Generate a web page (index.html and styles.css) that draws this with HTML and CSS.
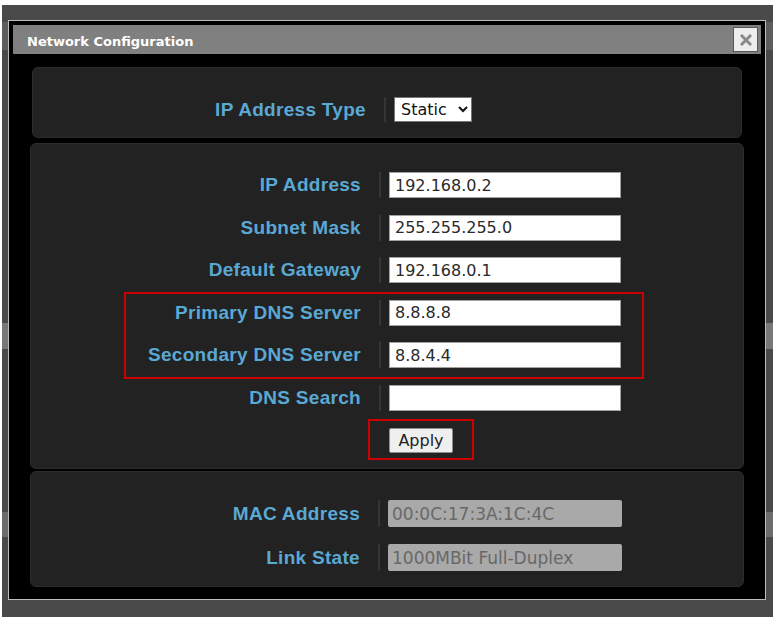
FILE: index.html
```
<!DOCTYPE html>
<html>
<head>
    <title>Network Configuration</title>
    <link rel="stylesheet" href="styles.css">
</head>
<body>

<div class="app">
    <div class="band band-top"></div>
    <div class="band band-mid"></div>
    <div class="band band-low"></div>

    <div class="dialog">
        <div class="titlebar">
            <span class="title">Network Configuration</span>
            <button class="close" title="Close">
                <svg width="12" height="12" viewBox="0 0 12 12">
                    <path d="M2 2 L10 10 M10 2 L2 10" stroke="#8a8a8a" stroke-width="3" stroke-linecap="square"/>
                </svg>
            </button>
        </div>

        <div class="content">
            <div class="panel panel-type">
                <div class="row">
                    <label>IP Address Type</label>
                    <span class="sep"></span>
                    <select>
                        <option>Static</option>
                        <option>DHCP</option>
                    </select>
                </div>
            </div>

            <div class="panel panel-ip">
                <div class="row">
                    <label>IP Address</label>
                    <span class="sep"></span>
                    <input type="text" value="192.168.0.2">
                </div>
                <div class="row">
                    <label>Subnet Mask</label>
                    <span class="sep"></span>
                    <input type="text" value="255.255.255.0">
                </div>
                <div class="row">
                    <label>Default Gateway</label>
                    <span class="sep"></span>
                    <input type="text" value="192.168.0.1">
                </div>
                <div class="row">
                    <label>Primary DNS Server</label>
                    <span class="sep"></span>
                    <input type="text" value="8.8.8.8">
                </div>
                <div class="row">
                    <label>Secondary DNS Server</label>
                    <span class="sep"></span>
                    <input type="text" value="8.8.4.4">
                </div>
                <div class="row">
                    <label>DNS Search</label>
                    <span class="sep"></span>
                    <input type="text" value="">
                </div>
                <div class="row row-apply">
                    <label></label>
                    <span class="sep blank"></span>
                    <button class="apply">Apply</button>
                </div>

                <!-- annotation boxes -->
                <div class="highlight hl-dns"></div>
                <div class="highlight hl-apply"></div>
            </div>

            <div class="panel panel-info">
                <div class="row">
                    <label>MAC Address</label>
                    <span class="sep"></span>
                    <input type="text" class="readonly" value="00:0C:17:3A:1C:4C" disabled>
                </div>
                <div class="row">
                    <label>Link State</label>
                    <span class="sep"></span>
                    <input type="text" class="readonly" value="1000MBit Full-Duplex" disabled>
                </div>
            </div>
        </div>
    </div>
</div>

</body>
</html>
```

FILE: styles.css
```
* {
    box-sizing: border-box;
}

body {
    margin: 0;
    background-color: #fff;
    font-family: "DejaVu Sans", Verdana, sans-serif;
}

.app {
    position: relative;
    width: 771px;
    height: 612px;
    margin: 5px 0 0 2px;
    background-color: #4a4a4a;
    overflow: hidden;
}

/* bits of the page behind the dialog */
.band {
    width: 100%;
}

.band-top {
    margin-top: 17px;
    height: 28px;
    background-color: #5d5d5d;
}

.band-mid {
    margin-top: 273px;
    height: 26px;
    background-color: #787878;
}

.band-low {
    margin-top: 163px;
    height: 25px;
    background-color: #6c6c6c;
}

.dialog {
    position: absolute;
    left: 6px;
    top: 15px;
    width: 758px;
    height: 580px;
    border: 1px solid #bdbdbd;
    background-color: #000;
    padding: 4px;
}

.titlebar {
    display: flex;
    align-items: center;
    justify-content: space-between;
    height: 29px;
    padding: 0 3px 0 14px;
    background-color: #808080;
}

.title {
    color: #fff;
    font-weight: bold;
    font-size: 13px;
    padding-top: 3px;
}

.close {
    width: 25px;
    height: 25px;
    padding: 0;
    display: flex;
    align-items: center;
    justify-content: center;
    background-color: #ededed;
    border: 1px solid #555;
    border-radius: 0;
}

.content {
    padding-top: 13px;
}

.panel {
    position: relative;
    background-color: #222;
    border: 1px solid #2c2c2c;
    border-radius: 6px;
    padding: 28px 0 15px;
    margin: 0 17px;
    display: flex;
    flex-direction: column;
    gap: 16.5px;
}

.panel-type {
    margin: 0 19px;
    padding-top: 29px;
    --label-w: 351px;
}

.panel-ip {
    margin-top: 5px;
    --label-w: 348px;
}

.panel-info {
    margin-top: 2px;
    gap: 17px;
    --label-w: 347px;
}

.row {
    display: flex;
    align-items: center;
}

.row label {
    width: var(--label-w);
    padding-right: 18px;
    text-align: right;
    font-family: "Liberation Sans", Arial, sans-serif;
    font-weight: bold;
    font-size: 19px;
    letter-spacing: 0.3px;
    color: #5aa8d4;
    white-space: nowrap;
}

.sep {
    align-self: stretch;
    width: 2px;
    margin-right: 8px;
    background-color: #353535;
}

.sep.blank {
    background-color: transparent;
}

.row-apply {
    margin-top: 1px;
}

input[type="text"] {
    width: 232px;
    height: 26px;
    padding: 0 5px;
    border: 1px solid #a0a0a0;
    background-color: #fff;
    color: #2a2a2a;
    font-family: "DejaVu Sans", Verdana, sans-serif;
    font-size: 16px;
    outline: none;
}

input.readonly {
    width: 234px;
    height: 27px;
    padding: 0 4px;
    border: none;
    border-radius: 2px;
    background-color: #a9a9a9;
    color: #686868;
    font-size: 17px;
}

select {
    width: 78px;
    height: 25px;
    padding: 0 2px;
    border: 1px solid #767676;
    border-radius: 0;
    background-color: #fff;
    color: #111;
    font-family: "DejaVu Sans", Verdana, sans-serif;
    font-size: 16px;
}

.apply {
    width: 64px;
    height: 25px;
    padding: 0;
    border: 1px solid #8f8f8f;
    border-radius: 2px;
    background-color: #efefef;
    color: #222;
    font-family: "DejaVu Sans", Verdana, sans-serif;
    font-size: 16px;
}

.highlight {
    position: absolute;
    border: 2px solid #cc0000;
    pointer-events: none;
}

.hl-dns {
    left: 93px;
    top: 148px;
    width: 520px;
    height: 87px;
}

.hl-apply {
    left: 337px;
    top: 275px;
    width: 106px;
    height: 41px;
}
```
